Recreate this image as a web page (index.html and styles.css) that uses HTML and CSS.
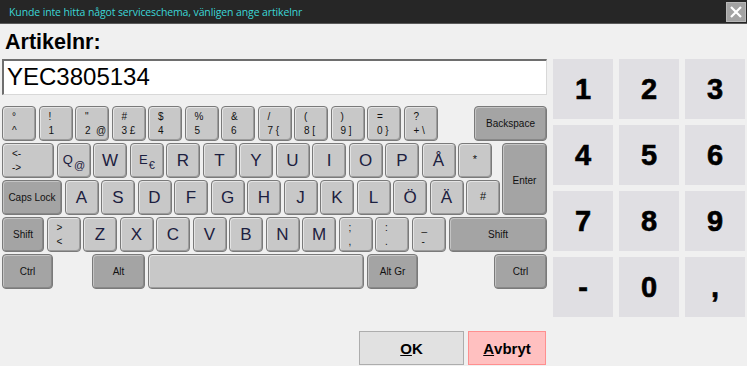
FILE: index.html
```html
<!DOCTYPE html>
<html lang="sv">
<head>
    <meta charset="UTF-8">
    <title>Artikelnr</title>
    <link rel="stylesheet" href="styles.css">
</head>
<body>
    <div class="titlebar">
        <span class="title">Kunde inte hitta något serviceschema, vänligen ange artikelnr</span>
        <div class="close-btn">
            <svg width="12" height="12" viewBox="0 0 12 12"><path d="M1 1 L11 11 M11 1 L1 11" stroke="#fff" stroke-width="2.2"/></svg>
        </div>
    </div>

    <div class="main">
        <div class="left">
            <div class="label">Artikelnr:</div>
            <div class="input">YEC3805134</div>

            <div class="keyboard">
                <div class="row">
                    <div class="key two"><span>°</span><span>^</span></div>
                    <div class="key two"><span>!</span><span>1</span></div>
                    <div class="key two"><span>"</span><span>2&nbsp;&nbsp;@</span></div>
                    <div class="key two"><span>#</span><span>3&nbsp;£</span></div>
                    <div class="key two"><span>$</span><span>4</span></div>
                    <div class="key two"><span>%</span><span>5</span></div>
                    <div class="key two"><span>&amp;</span><span>6</span></div>
                    <div class="key two"><span>/</span><span>7&nbsp;{</span></div>
                    <div class="key two"><span>(</span><span>8&nbsp;[</span></div>
                    <div class="key two"><span>)</span><span>9&nbsp;]</span></div>
                    <div class="key two"><span>=</span><span>0&nbsp;}</span></div>
                    <div class="key two"><span>?</span><span>+&nbsp;\</span></div>
                    <div class="key dark backspace">Backspace</div>
                </div>

                <div class="mid">
                    <div class="mid-rows">
                        <div class="row">
                            <div class="key two tab"><span>&lt;-</span><span>-&gt;</span></div>
                            <div class="key letter">Q<span class="alt-char">@</span></div>
                            <div class="key letter big">W</div>
                            <div class="key letter">E<span class="alt-char">€</span></div>
                            <div class="key letter big">R</div>
                            <div class="key letter big">T</div>
                            <div class="key letter big">Y</div>
                            <div class="key letter big">U</div>
                            <div class="key letter big">I</div>
                            <div class="key letter big">O</div>
                            <div class="key letter big">P</div>
                            <div class="key letter big">Å</div>
                            <div class="key small">*</div>
                        </div>
                        <div class="row">
                            <div class="key dark caps">Caps Lock</div>
                            <div class="key letter big">A</div>
                            <div class="key letter big">S</div>
                            <div class="key letter big">D</div>
                            <div class="key letter big">F</div>
                            <div class="key letter big">G</div>
                            <div class="key letter big">H</div>
                            <div class="key letter big">J</div>
                            <div class="key letter big">K</div>
                            <div class="key letter big">L</div>
                            <div class="key letter big">Ö</div>
                            <div class="key letter big">Ä</div>
                            <div class="key small">#</div>
                        </div>
                    </div>
                    <div class="key dark enter">Enter</div>
                </div>

                <div class="row">
                    <div class="key dark lshift">Shift</div>
                    <div class="key two"><span>&gt;</span><span>&lt;</span></div>
                    <div class="key letter big">Z</div>
                    <div class="key letter big">X</div>
                    <div class="key letter big">C</div>
                    <div class="key letter big">V</div>
                    <div class="key letter big">B</div>
                    <div class="key letter big">N</div>
                    <div class="key letter big">M</div>
                    <div class="key two"><span>;</span><span>,</span></div>
                    <div class="key two"><span>:</span><span>.</span></div>
                    <div class="key two"><span>_</span><span>-</span></div>
                    <div class="key dark rshift">Shift</div>
                </div>

                <div class="row last">
                    <div class="key dark ctrl">Ctrl</div>
                    <div class="key dark alt">Alt</div>
                    <div class="key space"></div>
                    <div class="key dark altgr">Alt Gr</div>
                    <div class="key dark ctrl rctrl">Ctrl</div>
                </div>
            </div>
        </div>

        <div class="right">
            <div class="numpad">
                <div class="num">1</div>
                <div class="num">2</div>
                <div class="num">3</div>
                <div class="num">4</div>
                <div class="num">5</div>
                <div class="num">6</div>
                <div class="num">7</div>
                <div class="num">8</div>
                <div class="num">9</div>
                <div class="num">-</div>
                <div class="num">0</div>
                <div class="num">,</div>
            </div>
        </div>
    </div>

    <div class="actions">
        <div class="btn ok"><u>O</u>K</div>
        <div class="btn cancel"><u>A</u>vbryt</div>
    </div>
</body>
</html>
```

FILE: styles.css
```css
* {
    margin: 0;
    padding: 0;
    box-sizing: border-box;
}

body {
    width: 747px;
    height: 366px;
    background-color: #f0f0f0;
    font-family: 'Liberation Sans', Arial, sans-serif;
    overflow: hidden;
}

/* Title bar */
.titlebar {
    height: 24px;
    background-color: #262626;
    border-bottom: 1px solid #5a5a5a;
    display: flex;
    justify-content: space-between;
    align-items: center;
    padding: 0 1px 0 9px;
}

.title {
    color: #3cd6d6;
    font-family: 'Open Sans', sans-serif;
    font-size: 10.5px;
    letter-spacing: -0.12px;
}

.close-btn {
    width: 20px;
    height: 20px;
    background-color: #a3a3a3;
    border: 1px solid #b8b8b8;
    display: flex;
    justify-content: center;
    align-items: center;
}

/* Main area */
.main {
    display: flex;
}

.left {
    width: 547px;
    padding-left: 2px;
}

.label {
    font-size: 21.5px;
    font-weight: bold;
    color: #000;
    padding: 6px 0 0 3px;
    height: 35px;
}

.input {
    height: 36px;
    width: 545px;
    background-color: #fff;
    border-top: 2px solid #6e6e6e;
    border-left: 2px solid #6e6e6e;
    border-right: 1px solid #d8d8d8;
    border-bottom: 1px solid #d8d8d8;
    font-size: 24px;
    line-height: 32px;
    padding-left: 3px;
    color: #000;
}

/* Keyboard */
.keyboard {
    margin-top: 11px;
    display: flex;
    flex-direction: column;
    gap: 2px;
}

.row {
    display: flex;
    gap: 2.5px;
    height: 35px;
}

.mid {
    display: flex;
    gap: 2px;
}

.mid-rows {
    display: flex;
    flex-direction: column;
    gap: 2px;
}

.key {
    width: 34px;
    height: 35px;
    background-color: #c8c8c8;
    border: 1px solid #7a7a7a;
    border-radius: 4px;
    box-shadow: inset 1px 1px 0 #e4e4e4, inset -1px -1px 0 #9c9c9c;
    display: flex;
    justify-content: center;
    align-items: center;
    font-size: 10px;
    color: #111;
    flex-shrink: 0;
}

.key.dark {
    background-color: #a4a4a4;
    box-shadow: inset 1px 1px 0 #c4c4c4, inset -1px -1px 0 #888;
}

.key.two {
    flex-direction: column;
    align-items: flex-start;
    justify-content: center;
    gap: 3px;
    padding-left: 9px;
    line-height: 11px;
}

.key.letter {
    font-size: 13px;
    color: #1c2040;
    padding-bottom: 3px;
}

.key.letter .alt-char {
    display: inline-block;
    font-size: 11px;
    transform: translate(1px, 6px);
}

.key.letter.big {
    font-size: 17px;
    padding-bottom: 0;
}

.key.small {
    font-size: 11px;
    padding-bottom: 4px;
}

.backspace {
    width: 73px;
    margin-left: auto;
}

.tab {
    width: 52px;
}

.caps {
    width: 60px;
}

.enter {
    width: 45px;
    height: 72px;
    margin-left: auto;
    align-items: flex-start;
    padding-top: 31px;
}

.lshift {
    width: 42px;
}

.rshift {
    width: 98px;
    margin-left: auto;
}

.row.last {
    gap: 3px;
}

.ctrl {
    width: 51px;
}

.alt {
    width: 53px;
    margin-left: 36px;
}

.space {
    width: 216px;
}

.altgr {
    width: 51px;
}

.rctrl {
    width: 53px;
    margin-left: auto;
}

/* Numpad */
.right {
    padding: 35px 0 0 6px;
}

.numpad {
    display: grid;
    grid-template-columns: repeat(3, 60px);
    grid-auto-rows: 60px;
    gap: 6px;
}

.num {
    background-color: #e0dfe3;
    display: flex;
    justify-content: center;
    align-items: center;
    font-size: 29px;
    font-weight: bold;
    color: #000;
    -webkit-text-stroke: 0.6px #000;
}

/* Buttons */
.actions {
    display: flex;
    gap: 4px;
    padding-left: 359px;
    margin-top: 14px;
}

.btn {
    height: 34px;
    display: flex;
    justify-content: center;
    align-items: center;
    font-size: 15px;
    font-weight: bold;
    color: #000;
}

.ok {
    width: 105px;
    background-color: #e1e1e1;
    border: 1px solid #adadad;
}

.cancel {
    width: 78px;
    background-color: #ffc0c0;
    border: 1px solid #ff8f8f;
}
```
